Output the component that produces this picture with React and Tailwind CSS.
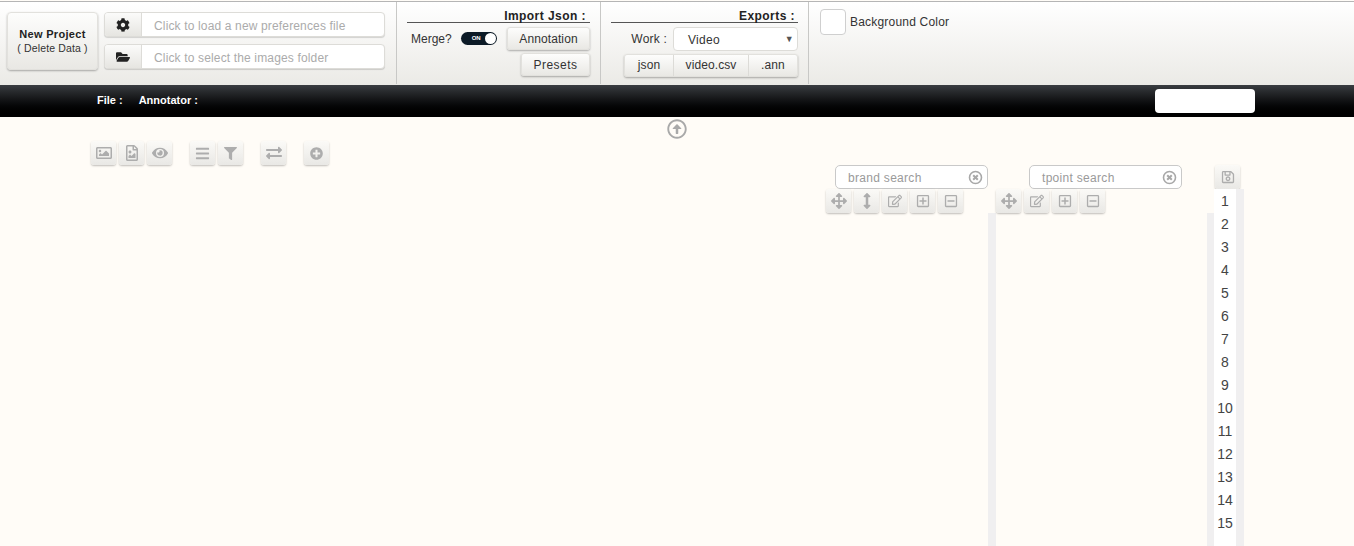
import React from 'react';
import {
  FaCog, FaFolderOpen, FaRegImage, FaRegFileImage, FaEye, FaBars, FaFilter, FaExchangeAlt,
  FaPlusCircle, FaArrowsAlt, FaArrowsAltV, FaRegEdit, FaRegPlusSquare, FaRegMinusSquare,
  FaRegSave, FaRegArrowAltCircleUp,
} from 'react-icons/fa';

const btn = 'bg-gradient-to-b from-[#fdfdfc] to-[#e9e8e4] border border-[#e2e1dd] shadow-[0_1px_2px_rgba(0,0,0,0.3)]';

// Small square grey tool button
function ToolButton({ icon: Icon, size = 15, className = '' }) {
  return (
    <button className={`flex items-center justify-center w-[25px] h-[24px] rounded-[3px] text-[#adadad] bg-gradient-to-b from-[#fbfaf7] to-[#e9e8e5] shadow-[0_1px_2px_rgba(0,0,0,0.25)] ${className}`}>
      <Icon size={size} />
    </button>
  );
}

function FileInput({ icon: Icon, label }) {
  return (
    <div className="flex h-[25px] w-[281px] rounded-[4px] bg-white border border-[#dddcd8] shadow-[0_1px_1px_rgba(0,0,0,0.15)] overflow-hidden">
      <div className="flex items-center justify-center w-[37px] bg-gradient-to-b from-[#fbfbfa] to-[#e6e5e1] border-r border-[#dddcd8] text-[#222]">
        <Icon size={14} />
      </div>
      <span className="pl-[12px] pt-px leading-[24px] text-[12px] tracking-[0.15px] text-[#ababab]">{label}</span>
    </div>
  );
}

// Ring with a small x in the middle, the clear button of the search boxes
function ClearIcon() {
  return (
    <svg width="15" height="15" viewBox="0 0 15 15" fill="none" stroke="#a8a8a8">
      <circle cx="7.5" cy="7.5" r="6" strokeWidth="1.6" />
      <path d="M5.2 5.2l4.6 4.6M9.8 5.2l-4.6 4.6" strokeWidth="2" />
    </svg>
  );
}

function SearchBox({ placeholder, className = '' }) {
  return (
    <div className={`flex items-center justify-between w-[153px] h-[24px] rounded-[5px] bg-white border border-[#c9c9c9] pl-[12px] pr-[4px] ${className}`}>
      <span className="pt-px text-[12px] tracking-[0.3px] text-[#9a9a9a]">{placeholder}</span>
      <ClearIcon />
    </div>
  );
}

function Header() {
  return (
    <header className="flex h-[84px] mt-[1px] border-t border-[#b5b5b5] bg-gradient-to-b from-white to-[#ebeae6] font-['Liberation_Sans',sans-serif] text-[#333]">
      <section className="flex gap-[6px] w-[397px] pl-[7px] pt-[10px] h-[82px] border-r border-[#c8c8c6]">
        <button className={`flex flex-col items-center justify-center w-[91px] h-[58px] rounded-[4px] ${btn}`}>
          <span className="text-[11px] font-bold leading-[14px] tracking-[0.3px] text-[#222]">New Project</span>
          <span className="text-[10.5px] leading-[14px] tracking-[0.15px] text-[#333]">( Delete Data )</span>
        </button>
        <div className="flex flex-col gap-[7px]">
          <FileInput icon={FaCog} label="Click to load a new preferences file" />
          <FileInput icon={FaFolderOpen} label="Click to select the images folder" />
        </div>
      </section>

      <section className="w-[204px] h-[82px] px-[10px] border-r border-[#c8c8c6]">
        <h3 className="h-[21px] pt-[7px] pr-[4px] text-right text-[12px] leading-[14px] font-bold tracking-[0.45px] border-b border-[#555] text-[#222]">Import Json :</h3>
        <div className="flex items-center h-[25px] mt-[3px]">
          <span className="pl-[4px] text-[12px]">Merge?</span>
          <span className="flex items-center justify-between ml-[9px] w-[36px] h-[13px] rounded-full bg-[#0c1a26] pl-[11px] pr-[1px]">
            <span className="text-[6px] font-bold text-white">ON</span>
            <span className="w-[11px] h-[11px] rounded-full bg-white" />
          </span>
          <button className={`ml-auto w-[83px] h-[23px] rounded-[3px] text-[12px] tracking-[0.1px] ${btn}`}>Annotation</button>
        </div>
        <div className="flex justify-end mt-[2px]">
          <button className={`w-[69px] h-[23px] rounded-[3px] text-[12px] tracking-[0.45px] ${btn}`}>Presets</button>
        </div>
      </section>

      <section className="w-[208px] h-[82px] px-[10px] border-r border-[#c8c8c6]">
        <h3 className="h-[21px] pt-[7px] pr-[3px] text-right text-[12px] leading-[14px] font-bold tracking-[0.45px] border-b border-[#555] text-[#222]">Exports :</h3>
        <div className="flex items-center h-[25px] mt-[3px]">
          <span className="ml-auto mr-[6px] text-[12px] tracking-[0.2px]">Work :</span>
          <div className="relative w-[125px] h-[24px] rounded-[4px] bg-white border border-[#dddcd8] pl-[14px] text-[12px] leading-[24px] tracking-[0.3px]">
            Video
            <span className="absolute right-[3px] top-0 text-[9px] leading-[22px] text-[#555]">▼</span>
          </div>
        </div>
        <div className={`flex ml-[13px] mt-[3px] w-[174px] h-[23px] rounded-[3px] text-[12px] tracking-[0.1px] leading-[21px] text-center ${btn}`}>
          <span className="w-[49px] border-r border-[#dcdbd7]">json</span>
          <span className="w-[75px] border-r border-[#dcdbd7]">video.csv</span>
          <span className="flex-1">.ann</span>
        </div>
      </section>

      <section className="flex items-start gap-[4px] pl-[11px] pt-[7px]">
        <div className="w-[26px] h-[26px] rounded-[4px] bg-white border border-[#cfcfcf]" />
        <span className="pt-[6px] text-[12px] leading-[14px] tracking-[0.2px]">Background Color</span>
      </section>
    </header>
  );
}

function StatusBar() {
  return (
    <div className="flex items-center h-[32px] pl-[97px] pr-[99px] bg-gradient-to-b from-[#3a3d41] to-black text-white text-[11px] leading-[12px] font-bold font-['Liberation_Sans',sans-serif]">
      <span className="pb-[2px]">File :</span>
      <span className="pb-[2px] ml-[16px]">Annotator :</span>
      <div className="ml-auto w-[100px] h-[24px] rounded-[4px] bg-white" />
    </div>
  );
}

function ScrollList({ className = '' }) {
  return <div className={`bg-[#f0eff0] ${className}`} />;
}

export default function App() {
  const numbers = Array.from({ length: 15 }, (_, i) => i + 1);

  return (
    <div className="h-[546px] overflow-hidden bg-[#fffcf7] font-['Liberation_Sans',sans-serif]">
      <Header />
      <StatusBar />

      <div className="flex justify-center h-[24px] pt-[2px] text-[#a9a9a9]">
        <FaRegArrowAltCircleUp size={20} />
      </div>

      <main className="flex h-[405px]">
        <div className="flex w-[826px] pl-[91px] items-start">
          <div className="flex gap-[3px]">
            <ToolButton icon={FaRegImage} size={16} />
            <ToolButton icon={FaRegFileImage} size={16} />
            <ToolButton icon={FaEye} size={16} />
          </div>
          <div className="flex gap-[3px] ml-[18px]">
            <ToolButton icon={FaBars} />
            <ToolButton icon={FaFilter} size={13} />
          </div>
          <ToolButton icon={FaExchangeAlt} size={16} className="ml-[18px]" />
          <ToolButton icon={FaPlusCircle} size={13} className="ml-[18px]" />
        </div>

        <div className="flex flex-col w-[170px] pt-[24px]">
          <SearchBox placeholder="brand search" className="ml-[9px]" />
          <div className="flex gap-[3px] h-[24px]">
            <ToolButton icon={FaArrowsAlt} size={16} />
            <ToolButton icon={FaArrowsAltV} size={16} />
            <ToolButton icon={FaRegEdit} size={14} />
            <ToolButton icon={FaRegPlusSquare} size={14} />
            <ToolButton icon={FaRegMinusSquare} size={14} />
          </div>
          <ScrollList className="flex-1 w-[8px] ml-[162px]" />
        </div>

        <div className="flex flex-col w-[218px] pt-[24px]">
          <SearchBox placeholder="tpoint search" className="ml-[33px]" />
          <div className="flex gap-[3px] h-[24px]">
            <ToolButton icon={FaArrowsAlt} size={16} />
            <ToolButton icon={FaRegEdit} size={14} />
            <ToolButton icon={FaRegPlusSquare} size={14} />
            <ToolButton icon={FaRegMinusSquare} size={14} />
          </div>
          <ScrollList className="flex-1 w-[7px] ml-[211px]" />
        </div>

        <div className="flex flex-col w-[30px] pt-[24px]">
          <ToolButton icon={FaRegSave} size={14} className="ml-px" />
          <div className="flex flex-1">
            <ol className="w-[22px] pt-px bg-white text-[14px] leading-[23px] text-[#444] text-center">
              {numbers.map(n => <li key={n}>{n}</li>)}
            </ol>
            <ScrollList className="w-[8px]" />
          </div>
        </div>
      </main>
    </div>
  );
}
